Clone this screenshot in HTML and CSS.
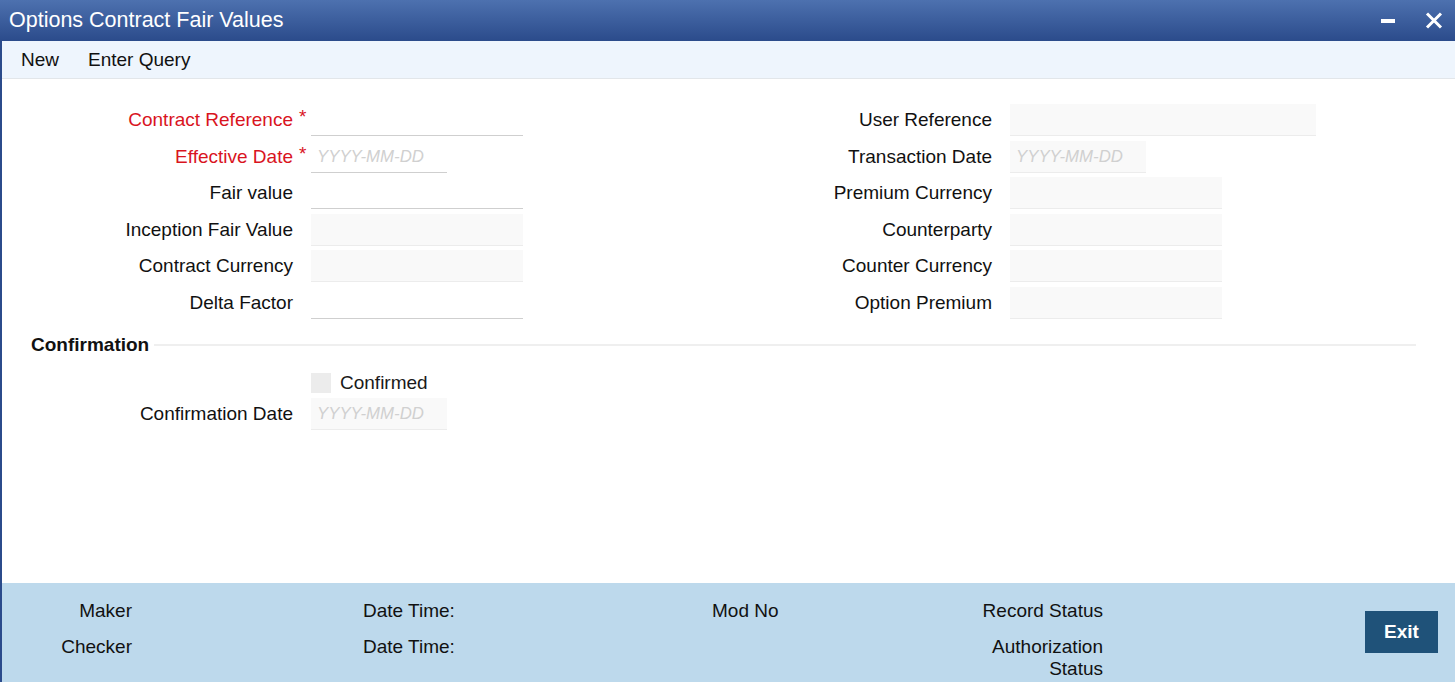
FILE: index.html
```html
<!DOCTYPE html>
<html>

<head>
    <meta name="viewport" content="width=device-width, initial-scale=1.0">
    <title>Options Contract Fair Values</title>
    <link rel="stylesheet" href="styles.css">
</head>

<body>
    <div class="window">
        <div class="titlebar">
            <span class="title">Options Contract Fair Values</span>
            <div class="win-buttons">
                <svg class="win-min" width="14" height="14" viewBox="0 0 14 14">
                    <rect x="0" y="6" width="14" height="4" fill="#fff" />
                </svg>
                <svg class="win-close" width="18" height="17" viewBox="0 0 18 17">
                    <path d="M2 1.5 L16 15.5 M16 1.5 L2 15.5" stroke="#fff" stroke-width="3" fill="none" />
                </svg>
            </div>
        </div>

        <div class="frame">
            <div class="toolbar">
                <span class="tool">New</span>
                <span class="tool">Enter Query</span>
            </div>

            <div class="content">
                <div class="columns">
                    <div class="col">
                        <div class="field">
                            <label class="lbl required">Contract Reference</label>
                            <span class="star">*</span>
                            <div class="input edit wide"></div>
                        </div>
                        <div class="field">
                            <label class="lbl required">Effective Date</label>
                            <span class="star">*</span>
                            <div class="input edit date">YYYY-MM-DD</div>
                        </div>
                        <div class="field">
                            <label class="lbl">Fair value</label>
                            <span class="star"></span>
                            <div class="input edit wide"></div>
                        </div>
                        <div class="field">
                            <label class="lbl">Inception Fair Value</label>
                            <span class="star"></span>
                            <div class="input ro wide"></div>
                        </div>
                        <div class="field">
                            <label class="lbl">Contract Currency</label>
                            <span class="star"></span>
                            <div class="input ro wide"></div>
                        </div>
                        <div class="field">
                            <label class="lbl">Delta Factor</label>
                            <span class="star"></span>
                            <div class="input edit wide"></div>
                        </div>
                    </div>

                    <div class="col">
                        <div class="field">
                            <label class="lbl">User Reference</label>
                            <span class="star"></span>
                            <div class="input ro xwide"></div>
                        </div>
                        <div class="field">
                            <label class="lbl">Transaction Date</label>
                            <span class="star"></span>
                            <div class="input ro date">YYYY-MM-DD</div>
                        </div>
                        <div class="field">
                            <label class="lbl">Premium Currency</label>
                            <span class="star"></span>
                            <div class="input ro wide"></div>
                        </div>
                        <div class="field">
                            <label class="lbl">Counterparty</label>
                            <span class="star"></span>
                            <div class="input ro wide"></div>
                        </div>
                        <div class="field">
                            <label class="lbl">Counter Currency</label>
                            <span class="star"></span>
                            <div class="input ro wide"></div>
                        </div>
                        <div class="field">
                            <label class="lbl">Option Premium</label>
                            <span class="star"></span>
                            <div class="input ro wide"></div>
                        </div>
                    </div>
                </div>

                <div class="section-head">
                    <span>Confirmation</span>
                    <div class="section-line"></div>
                </div>

                <div class="check-row">
                    <span class="checkbox"></span>
                    <span>Confirmed</span>
                </div>
                <div class="field">
                    <label class="lbl">Confirmation Date</label>
                    <span class="star"></span>
                    <div class="input ro date">YYYY-MM-DD</div>
                </div>
            </div>

            <div class="footer">
                <div class="audit">
                    <span class="a-lbl">Maker</span>
                    <span></span>
                    <span>Date Time:</span>
                    <span>Mod No</span>
                    <span class="a-lbl">Record Status</span>

                    <span class="a-lbl">Checker</span>
                    <span></span>
                    <span>Date Time:</span>
                    <span></span>
                    <span class="a-lbl">Authorization Status</span>
                </div>
                <button class="exit-btn">Exit</button>
            </div>
        </div>
    </div>
</body>

</html>
```

FILE: styles.css
```css
body {
    margin: 0;
    padding: 0;
    font-family: "Liberation Sans", Arial, sans-serif;
    color: #1a1a1a;
    background: #fff;
}

.window {
    width: 1455px;
    height: 682px;
    display: flex;
    flex-direction: column;
    overflow: hidden;
}

.titlebar {
    height: 41px;
    flex-shrink: 0;
    display: flex;
    align-items: center;
    justify-content: space-between;
    background: linear-gradient(#4d71af, #2b4b8b);
    color: #fff;
    padding: 0 12px 0 9px;
}

.title {
    font-size: 21.5px;
}

.win-buttons {
    display: flex;
    align-items: center;
    gap: 30px;
    margin-top: -1px;
}

.frame {
    flex: 1;
    display: flex;
    flex-direction: column;
    border-left: 2px solid #2b4b8b;
}

.toolbar {
    height: 36px;
    flex-shrink: 0;
    display: flex;
    align-items: center;
    gap: 29px;
    padding: 1px 0 0 19px;
    background-color: #eef5fd;
    border-bottom: 1px solid #e2e6ea;
    font-size: 19px;
    color: #111;
}

.content {
    flex: 1;
    padding-top: 25px;
    font-size: 19px;
}

.columns {
    display: flex;
}

.col {
    width: 699px;
    display: flex;
    flex-direction: column;
    gap: 4.6px;
}

.field {
    display: flex;
    align-items: center;
}

.lbl {
    width: 291px;
    text-align: right;
    color: #111;
}

.lbl.required {
    color: #d9141e;
}

.star {
    width: 18px;
    color: #d9141e;
    font-size: 19px;
    align-self: flex-start;
    margin-top: 2px;
    text-indent: 6px;
}

.input {
    height: 32px;
    box-sizing: border-box;
    font-size: 16.8px;
    font-style: italic;
    color: #d0d0d0;
    padding: 6px 0 0 6px;
}

.input.edit {
    background: #fff;
    border-bottom: 1px solid #cfcfcf;
}

.input.ro {
    background: #f9f9f9;
    border-bottom: 1px solid #ececec;
}

.wide {
    width: 212px;
}

.xwide {
    width: 306px;
}

.date {
    width: 136px;
}

.section-head {
    display: flex;
    align-items: center;
    margin: 15px 39px 0 29px;
    font-weight: bold;
    font-size: 19px;
    color: #111;
}

.section-line {
    flex: 1;
    height: 2px;
    background: #efefef;
    margin-left: 5px;
}

.check-row {
    display: flex;
    align-items: center;
    gap: 9px;
    margin: 16px 0 4px 309px;
}

.checkbox {
    width: 20px;
    height: 20px;
    background: #ececec;
}

.footer {
    height: 99px;
    flex-shrink: 0;
    display: flex;
    align-items: flex-start;
    background-color: #bdd9ec;
    font-size: 19px;
    color: #111;
}

.audit {
    display: grid;
    grid-template-columns: 130px 231px 349px 266px 125px;
    row-gap: 14px;
    line-height: 22px;
    padding-top: 17px;
}

.a-lbl {
    text-align: right;
}

.exit-btn {
    margin: 28px 17px 0 auto;
    width: 73px;
    height: 42px;
    border: none;
    background-color: #1f5279;
    color: #fff;
    font-family: "Liberation Sans", Arial, sans-serif;
    font-weight: bold;
    font-size: 19px;
    cursor: pointer;
}
```
